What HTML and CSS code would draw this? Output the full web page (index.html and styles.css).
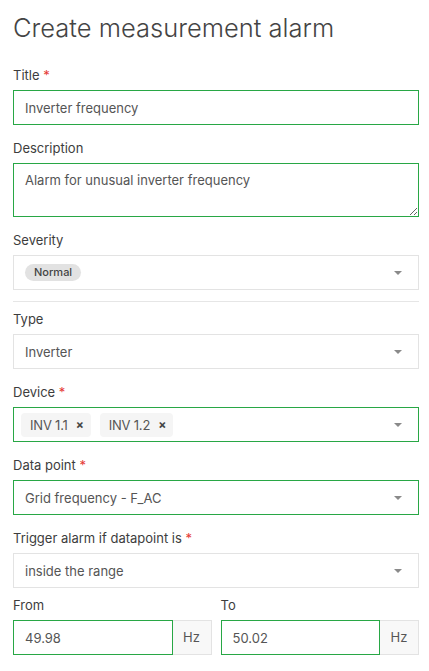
FILE: index.html
```html
<!DOCTYPE html>
<html>
<head>
    <meta charset="UTF-8">
    <meta name="viewport" content="width=device-width, initial-scale=1.0">
    <title>Create measurement alarm</title>
    <link rel="stylesheet" href="styles.css">
</head>
<body>
    <form class="alarm-form" name="alarm">
        <h1 class="page-title">Create measurement alarm</h1>

        <div class="field">
            <label class="field-label">Title <span class="req">*</span></label>
            <input class="control valid" type="text" value="Inverter frequency">
        </div>

        <div class="field">
            <label class="field-label">Description</label>
            <textarea class="control valid area">Alarm for unusual inverter frequency</textarea>
        </div>

        <div class="field last">
            <label class="field-label">Severity</label>
            <div class="control select">
                <span class="pill">Normal</span>
                <span class="caret"></span>
            </div>
        </div>

        <hr class="divider">

        <div class="field">
            <label class="field-label">Type</label>
            <div class="control select">
                <span class="value">Inverter</span>
                <span class="caret"></span>
            </div>
        </div>

        <div class="field">
            <label class="field-label">Device <span class="req">*</span></label>
            <div class="control select valid multi">
                <span class="chip">INV 1.1 <b class="chip-x">&times;</b></span>
                <span class="chip">INV 1.2 <b class="chip-x">&times;</b></span>
                <span class="caret"></span>
            </div>
        </div>

        <div class="field">
            <label class="field-label">Data point <span class="req">*</span></label>
            <div class="control select valid">
                <span class="value">Grid frequency - F_AC</span>
                <span class="caret"></span>
            </div>
        </div>

        <div class="field tight">
            <label class="field-label">Trigger alarm if datapoint is <span class="req">*</span></label>
            <div class="control select">
                <span class="value">inside the range</span>
                <span class="caret"></span>
            </div>
        </div>

        <div class="range">
            <div class="field">
                <label class="field-label">From</label>
                <div class="input-group">
                    <input class="control valid" type="text" value="49.98">
                    <span class="addon">Hz</span>
                </div>
            </div>
            <div class="field">
                <label class="field-label">To</label>
                <div class="input-group">
                    <input class="control valid" type="text" value="50.02">
                    <span class="addon">Hz</span>
                </div>
            </div>
        </div>
    </form>
</body>
</html>
```

FILE: styles.css
```css
html,
body {
    margin: 0;
    padding: 0;
    background: #fff;
}

body {
    font-family: 'Inter', 'Noto Sans', sans-serif;
    font-size: 13px;
    color: #3a3a3a;
}

.alarm-form {
    padding: 12px 10px 0 13px;
}

.page-title {
    margin: 0 0 22px;
    font-size: 25.5px;
    line-height: 32px;
    font-weight: 300;
    color: #444;
}

.field {
    margin-bottom: 14px;
}

.field.tight {
    margin-bottom: 8px;
}

.field.last {
    margin-bottom: 0;
}

.field-label {
    display: block;
    line-height: 18px;
    margin-bottom: 6px;
    color: #3d3d3d;
}

.req {
    color: #e53935;
}

.control {
    display: block;
    box-sizing: border-box;
    width: 100%;
    height: 35px;
    margin: 0;
    padding: 0 11px;
    border: 1px solid #e3e3e3;
    border-radius: 0;
    background: #fff;
    font-family: inherit;
    font-size: 13px;
    color: #555;
    outline: none;
}

.control.valid {
    border-color: #28a745;
}

.area {
    height: 54px;
    padding: 7px 11px;
    line-height: 18px;
    resize: vertical;
}

.select {
    display: flex;
    align-items: center;
    gap: 9px;
    padding-right: 16px;
}

.select .value {
    flex: 1;
}

.caret {
    margin-left: auto;
    width: 0;
    height: 0;
    border-left: 4px solid transparent;
    border-right: 4px solid transparent;
    border-top: 4px solid #8a8a8a;
}

.pill {
    display: inline-block;
    height: 17px;
    line-height: 17px;
    padding: 0 9px;
    border-radius: 9px;
    background: #e2e2e2;
    font-size: 11px;
    font-weight: 500;
    color: #444;
}

.multi {
    padding-left: 7px;
}

.chip {
    display: inline-flex;
    align-items: center;
    gap: 8px;
    height: 24px;
    padding: 0 7px 0 9px;
    border-radius: 4px;
    background: #f5f5f5;
    color: #555;
    letter-spacing: -0.2px;
}

.chip-x {
    font-size: 12px;
    font-weight: 700;
    color: #444;
}

.divider {
    border: 0;
    border-top: 1px solid #e6e6e6;
    margin: 11px 0 8px;
}

.range {
    display: grid;
    grid-template-columns: 1fr 1fr;
    gap: 9px;
}

.input-group {
    display: flex;
}

.input-group .control {
    flex: 1;
    min-width: 0;
}

.addon {
    box-sizing: border-box;
    width: 39px;
    height: 35px;
    line-height: 33px;
    text-align: center;
    border: 1px solid #e3e3e3;
    border-left: 0;
    background: #f8f8f8;
    color: #555;
}
```
